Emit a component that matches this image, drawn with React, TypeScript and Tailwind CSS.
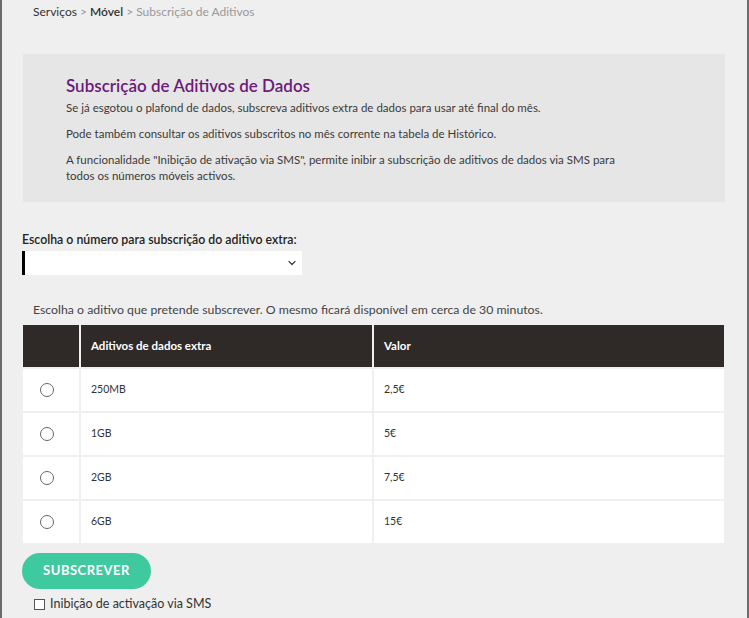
import { ChevronDown } from "lucide-react";

const ADDONS = [
  { size: "250MB", price: "2,5€" },
  { size: "1GB", price: "5€" },
  { size: "2GB", price: "7,5€" },
  { size: "6GB", price: "15€" },
];

export default function App() {
  return (
    <div
      className="min-h-[618px] w-[749px] border-x-2 border-[#6b6b6b] bg-[#efefef] text-[#333]"
      style={{ fontFamily: "Lato, 'Noto Sans', sans-serif" }}
    >
      {/* breadcrumb */}
      <div className="px-[31px] pt-[4px] text-[12px] leading-[16px]">
        <span className="text-[#333]">Serviços</span>
        <span className="text-[#999]"> &gt; </span>
        <span className="font-semibold text-[#333]">Móvel</span>
        <span className="text-[#999]"> &gt; Subscrição de Aditivos</span>
      </div>

      <div className="pl-[20px] pr-[22px]">
        {/* intro box */}
        <div className="mt-[34px] ml-[1px] bg-[#e6e6e6] px-[43px] pt-[20px] pb-[18px] text-[11.5px] leading-[16px] text-[#3a3a3a]">
          <h1 className="text-[17px] font-semibold leading-[24px] text-[#6d1a7c]">
            Subscrição de Aditivos de Dados
          </h1>
          <p className="mt-[2px]">
            Se já esgotou o plafond de dados, subscreva aditivos extra de dados para usar até final do mês.
          </p>
          <p className="mt-[10px]">
            Pode também consultar os aditivos subscritos no mês corrente na tabela de Histórico.
          </p>
          <p className="mt-[10px] w-[565px]">
            A funcionalidade "Inibição de ativação via SMS", permite inibir a subscrição de aditivos de dados via SMS para todos os números móveis activos.
          </p>
        </div>

        {/* number selector */}
        <div className="mt-[30px] text-[12.3px] font-semibold leading-[15px] text-[#222]">
          Escolha o número para subscrição do aditivo extra:
        </div>
        <div className="mt-[4px] flex h-[24px] w-[280px] items-center justify-end border-l-[3px] border-black bg-white pr-[4px]">
          <ChevronDown className="h-[12px] w-[12px] text-[#444]" strokeWidth={2.5} />
        </div>

        <p className="mt-[27px] pl-[11px] text-[12.3px] leading-[15px] text-[#444]">
          Escolha o aditivo que pretende subscrever. O mesmo ficará disponível em cerca de 30 minutos.
        </p>

        {/* addons table */}
        <table className="mt-[6px] -ml-[1px] w-[705px] border-separate border-spacing-[2px] text-[10.5px]">
          <thead>
            <tr className="h-[42px] bg-[#2f2a28] text-left text-[11.5px] font-bold text-white">
              <th className="w-[56px]" />
              <th className="w-[291px] pl-[10px]">Aditivos de dados extra</th>
              <th className="pl-[10px]">Valor</th>
            </tr>
          </thead>
          <tbody>
            {ADDONS.map((a) => (
              <tr key={a.size} className="h-[42px] bg-white text-[#333]">
                <td className="pl-[17px] text-left">
                  <span className="inline-block h-[14px] w-[14px] rounded-full border-[1.5px] border-[#666] align-middle" />
                </td>
                <td className="pl-[10px]">{a.size}</td>
                <td className="pl-[10px]">{a.price}</td>
              </tr>
            ))}
          </tbody>
        </table>

        <button className="mt-[8px] h-[36px] w-[129px] rounded-full bg-[#3ec99e] text-[13px] font-bold tracking-[0.5px] text-white">
          SUBSCREVER
        </button>

        <label className="mt-[7px] ml-[12px] flex items-center gap-[5px] text-[12.5px] leading-[16px] text-[#333]">
          <span className="inline-block h-[11px] w-[11px] border border-[#555] bg-white" />
          Inibição de activação via SMS
        </label>
      </div>
    </div>
  );
}
